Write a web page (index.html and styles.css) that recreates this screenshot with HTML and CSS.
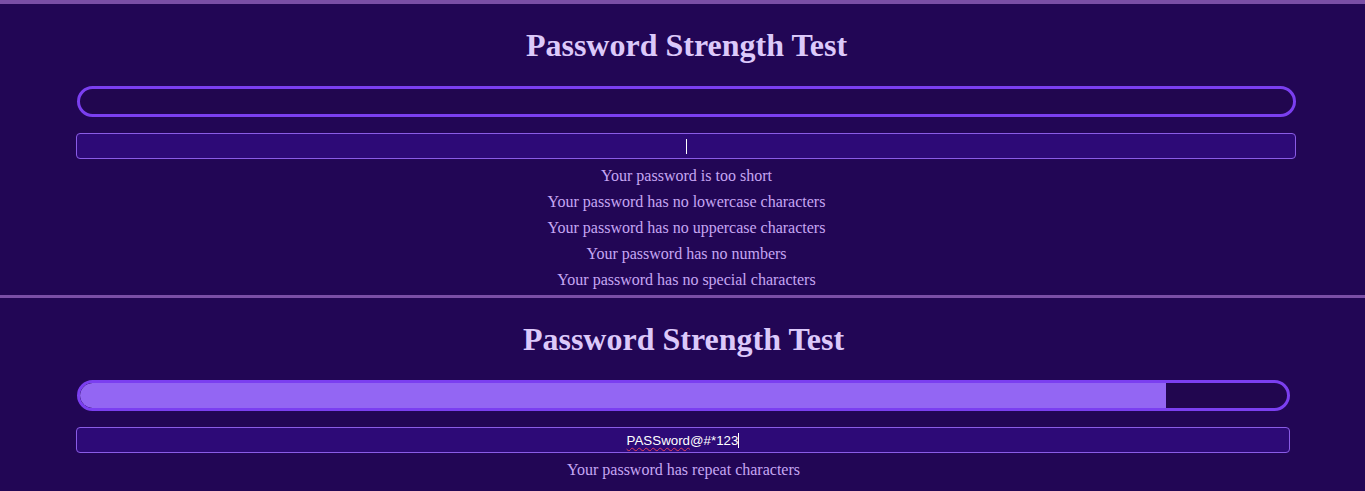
FILE: index.html
```html
<!DOCTYPE html>
<html>
<head>
<meta charset="utf-8">
<link rel="stylesheet" href="styles.css">
</head>
<body>
<section class="panel panel-first">
  <h1 class="title">Password Strength Test</h1>
  <div class="meter"><div class="meter-fill" style="width:0%"></div></div>
  <div class="field"><span class="caret"></span></div>
  <ul class="messages">
    <li>Your password is too short</li>
    <li>Your password has no lowercase characters</li>
    <li>Your password has no uppercase characters</li>
    <li>Your password has no numbers</li>
    <li>Your password has no special characters</li>
  </ul>
</section>
<section class="panel panel-second">
  <h1 class="title">Password Strength Test</h1>
  <div class="meter"><div class="meter-fill" style="width:90%"></div></div>
  <div class="field"><span class="value"><span class="misspelled">PASSword</span>@#*123</span><span class="caret"></span></div>
  <ul class="messages">
    <li>Your password has repeat characters</li>
  </ul>
</section>
</body>
</html>
```
FILE: styles.css
```css
html, body {
  margin: 0;
  padding: 0;
  background: #220655;
  overflow: hidden;
}
body {
  width: 1365px;
  height: 491px;
  font-family: "Liberation Serif", "Times New Roman", serif;
}
.panel {
  box-sizing: border-box;
  border-top: 4px solid #7a4ea6;
  background: #220655;
  padding: 0 69px 0 77px;
  overflow: hidden;
}
.panel-first {
  height: 295px;
}
.panel-second {
  height: 196px;
  border-top-width: 3px;
  padding-right: 75px;
}
.title {
  margin: 0;
  padding-top: 23px;
  height: 82px;
  box-sizing: border-box;
  text-align: center;
  font-size: 32px;
  line-height: 36px;
  font-weight: bold;
  color: #dcc9fa;
}
.meter {
  box-sizing: border-box;
  height: 31px;
  border: 3px solid #7b3ff0;
  border-radius: 16px;
  background: #21064f;
  overflow: hidden;
  display: flex;
}
.meter-fill {
  height: 100%;
  background: #9366f3;
  border-radius: 13px 0 0 13px;
}
.field {
  box-sizing: border-box;
  margin-top: 16px;
  margin-left: -1px;
  height: 26px;
  border: 1px solid #8a5ce6;
  border-radius: 4px;
  background: #2d0a77;
  display: flex;
  align-items: center;
  justify-content: center;
  font-family: "Liberation Sans", Arial, sans-serif;
  font-size: 13.33px;
  color: #ffffff;
}
.misspelled {
  text-decoration: underline wavy #e0405a;
  text-decoration-thickness: 1px;
  text-underline-offset: 2px;
}
.caret {
  display: inline-block;
  width: 1px;
  height: 15px;
  background: #ffffff;
}
.messages {
  list-style: none;
  margin: 4px 0 0;
  padding: 0;
  text-align: center;
  font-size: 16px;
  line-height: 26px;
  color: #c6a6f3;
}
```
